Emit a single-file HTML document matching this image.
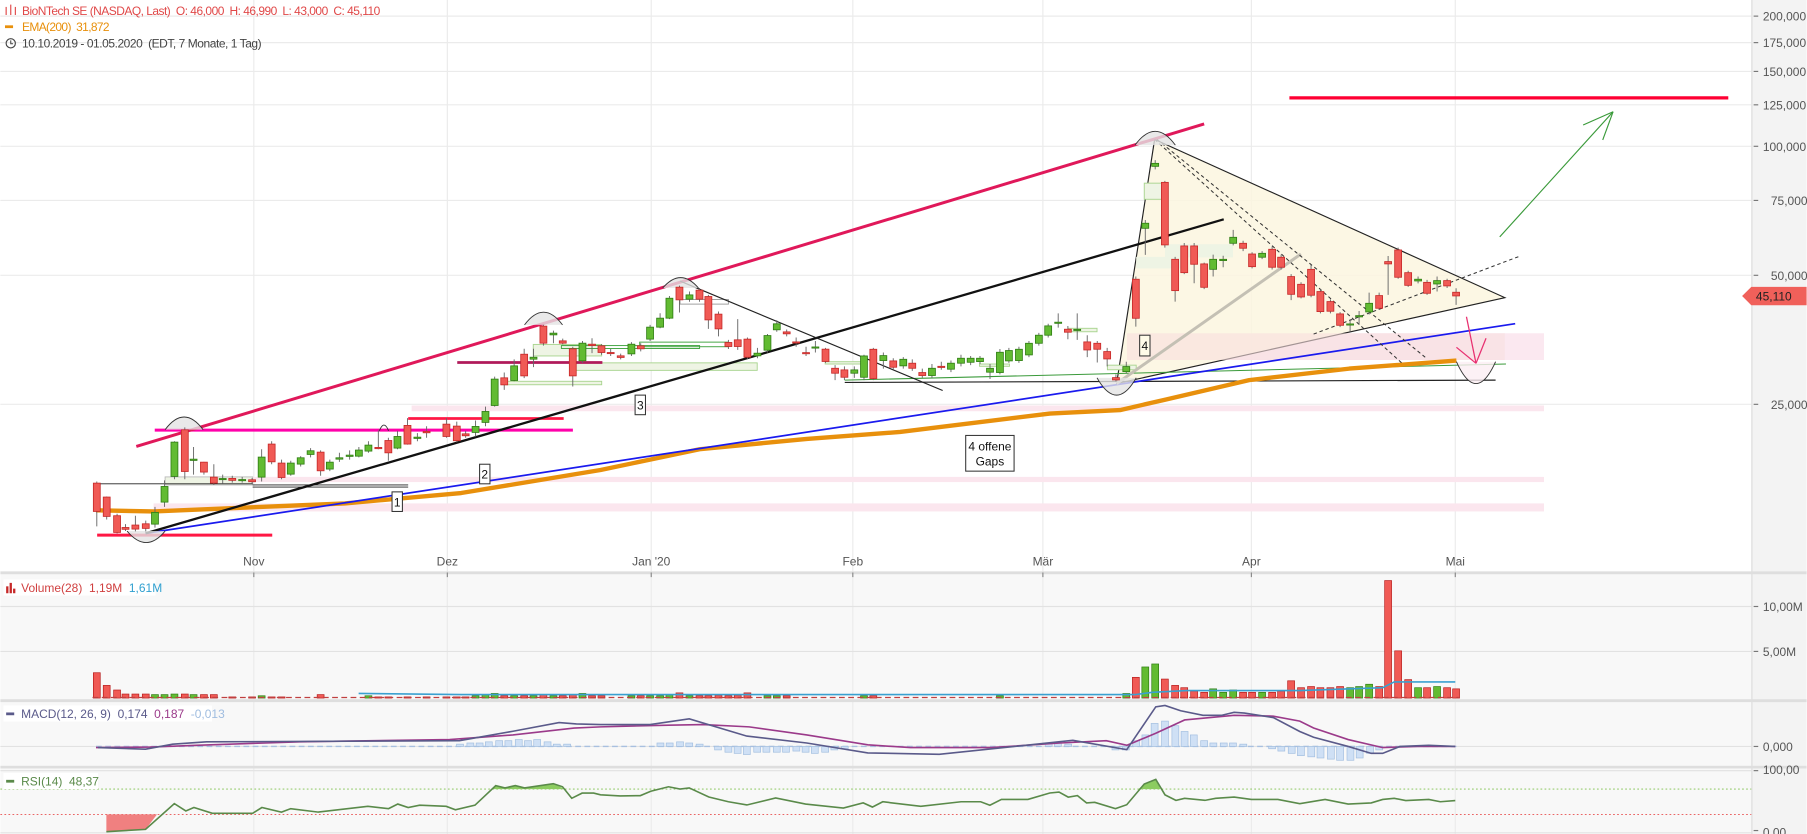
<!DOCTYPE html>
<html><head><meta charset="utf-8"><style>html,body{margin:0;padding:0;background:#fff;overflow:hidden}svg{display:block}text{font-family:"Liberation Sans",Arial,sans-serif}</style></head><body>
<svg width="1807" height="834" viewBox="0 0 1568 724" xmlns="http://www.w3.org/2000/svg">
<rect width="1568" height="724" fill="#fff"/>
<rect x="0" y="498" width="1520" height="226" fill="#f8f8f8"/>
<rect x="1520" y="0" width="48" height="724" fill="#f3f3f3"/>
<line x1="1520.5" y1="0" x2="1520.5" y2="724" stroke="#dcdcdc"/>
<!-- grid -->
<g stroke="#ebebeb" stroke-width="1">
<line x1="0" y1="14" x2="1520" y2="14"/><line x1="0" y1="37" x2="1520" y2="37"/><line x1="0" y1="62" x2="1520" y2="62"/><line x1="0" y1="91" x2="1520" y2="91"/><line x1="0" y1="127" x2="1520" y2="127"/><line x1="0" y1="174" x2="1520" y2="174"/><line x1="0" y1="239" x2="1520" y2="239"/><line x1="0" y1="351" x2="1520" y2="351"/>
<line x1="220" y1="0" x2="220" y2="724"/><line x1="388" y1="0" x2="388" y2="724"/><line x1="565" y1="0" x2="565" y2="724"/><line x1="740" y1="0" x2="740" y2="724"/><line x1="905" y1="0" x2="905" y2="724"/><line x1="1086" y1="0" x2="1086" y2="724"/><line x1="1263" y1="0" x2="1263" y2="724"/>
</g>
<g stroke="#e2e2e2"><line x1="0" y1="526.5" x2="1520" y2="526.5"/><line x1="0" y1="565.5" x2="1520" y2="565.5"/><line x1="0" y1="648" x2="1520" y2="648"/><line x1="0" y1="669" x2="1520" y2="669"/><line x1="0" y1="723" x2="1520" y2="723"/></g>
<line x1="0" y1="685" x2="1520" y2="685" stroke="#7cc04a" stroke-width=".8" stroke-dasharray="1.5,2"/>
<line x1="0" y1="707" x2="1520" y2="707" stroke="#e85050" stroke-width=".8" stroke-dasharray="1.5,2"/>
<!-- separators -->
<rect x="0" y="496" width="1568" height="2.5" fill="#dedede"/>
<rect x="0" y="607" width="1568" height="2.5" fill="#dedede"/>
<rect x="0" y="664.8" width="1568" height="2.3" fill="#dedede"/>
<!-- axis labels -->
<g font-size="10.4" fill="#555">
<g stroke="#777"><line x1="1522" y1="14" x2="1526" y2="14"/><line x1="1522" y1="37" x2="1526" y2="37"/><line x1="1522" y1="62" x2="1526" y2="62"/><line x1="1522" y1="91" x2="1526" y2="91"/><line x1="1522" y1="127" x2="1526" y2="127"/><line x1="1522" y1="174" x2="1526" y2="174"/><line x1="1522" y1="239" x2="1526" y2="239"/><line x1="1522" y1="351" x2="1526" y2="351"/><line x1="1522" y1="526.5" x2="1526" y2="526.5"/><line x1="1522" y1="565.5" x2="1526" y2="565.5"/><line x1="1522" y1="648" x2="1526" y2="648"/><line x1="1522" y1="669" x2="1526" y2="669"/><line x1="1522" y1="721" x2="1526" y2="721"/></g>
<text x="1530" y="18">200,000</text><text x="1530" y="41">175,000</text><text x="1530" y="66">150,000</text><text x="1530" y="95">125,000</text><text x="1530" y="131">100,000</text><text x="1537" y="178">75,000</text><text x="1537" y="243">50,000</text><text x="1537" y="355">25,000</text>
<text x="1530" y="530.5">10,00M</text><text x="1530" y="569.5">5,00M</text><text x="1530" y="652">0,000</text><text x="1530" y="672">100,00</text><text x="1530" y="726">0,00</text>
<g text-anchor="middle"><text x="220" y="491">Nov</text><text x="388" y="491">Dez</text><text x="565" y="491">Jan '20</text><text x="740" y="491">Feb</text><text x="905" y="491">Mär</text><text x="1086" y="491">Apr</text><text x="1263" y="491">Mai</text></g>
</g>
<g stroke="#888"><line x1="220" y1="497" x2="220" y2="501"/><line x1="388" y1="497" x2="388" y2="501"/><line x1="565" y1="497" x2="565" y2="501"/><line x1="740" y1="497" x2="740" y2="501"/><line x1="905" y1="497" x2="905" y2="501"/><line x1="1086" y1="497" x2="1086" y2="501"/><line x1="1263" y1="497" x2="1263" y2="501"/></g>
<!-- price tag -->
<path d="M1512 257 L1520 249 L1568 249 L1568 265 L1520 265 Z" fill="#f0605a"/>
<text x="1524" y="261" font-size="10.4" fill="#222">45,110</text>
<!-- header -->
<g font-size="10.4">
<g stroke="#e04848" stroke-width="1"><line x1="5" y1="6" x2="5" y2="13"/><line x1="9" y1="4" x2="9" y2="13"/><line x1="13" y1="6" x2="13" y2="13"/></g>
<text x="18.8" y="13.2" fill="#e04848" xml:space="preserve" textLength="311">BioNTech SE (NASDAQ, Last)  O: 46,000  H: 46,990  L: 43,000  C: 45,110</text>
<rect x="4" y="22" width="7" height="2.4" fill="#e8900c"/>
<text x="18.8" y="26.8" fill="#e8900c" xml:space="preserve" textLength="76">EMA(200)  31,872</text>
<circle cx="9" cy="37.6" r="4" fill="none" stroke="#444" stroke-width="1"/><path d="M9 35 V38 H11" fill="none" stroke="#444" stroke-width=".9"/>
<text x="18.8" y="41.3" fill="#444" xml:space="preserve" textLength="208">10.10.2019 - 01.05.2020  (EDT, 7 Monate, 1 Tag)</text>
</g>
<!-- pink gap bands -->
<g fill="#fbe6ee">
<rect x="133" y="437" width="1207" height="7"/>
<rect x="219" y="414" width="1121" height="4.5"/>
<rect x="357" y="352" width="983" height="5"/>
<rect x="978" y="289.3" width="362" height="23.2" fill-opacity=".9"/>
</g>
<!-- triangle -->
<path d="M1002 121 L1306 258.4 L969 333 Z" fill="#fbf6df" fill-opacity=".85" stroke="#222" stroke-width="1"/>
<rect x="978" y="289.3" width="328" height="23.2" fill="#f9dfe0" fill-opacity=".6"/>
<!-- green gap rects -->
<g fill="#eef4e4" stroke="#a8d48e" stroke-width=".8">
<rect x="143" y="414" width="76" height="7" stroke="#bbb"/>
<rect x="462.6" y="299" width="59.4" height="10"/>
<rect x="497" y="315" width="160" height="6.5"/>
<rect x="437" y="331" width="85" height="3"/>
<rect x="716" y="314" width="34" height="2"/>
<rect x="850" y="316" width="26" height="2"/>
<rect x="927" y="285" width="25" height="3"/>
<rect x="961" y="317" width="25" height="4"/>
<rect x="993" y="159" width="18" height="14"/>
<rect x="1011" y="212" width="59" height="11.5" stroke="none"/>
<rect x="986" y="223" width="41" height="10" stroke="none"/>
</g>
<g fill="none" stroke="#3aa03a" stroke-width=".8"><rect x="487" y="300" width="120" height="2.5"/><rect x="555" y="297" width="77" height="4"/></g>
<rect x="590" y="260" width="42" height="4" fill="none" stroke="#999" stroke-width=".8"/>
<!-- horizontal support lines -->
<line x1="84" y1="420" x2="219" y2="420" stroke="#222" stroke-width=".8"/>
<line x1="219" y1="421" x2="354" y2="421" stroke="#222" stroke-width=".8"/>
<line x1="219" y1="422.8" x2="354" y2="422.8" stroke="#222" stroke-width=".8"/>
<line x1="733" y1="332" x2="1298" y2="330" stroke="#222" stroke-width="1"/>
<line x1="733" y1="330" x2="1307" y2="316" stroke="#3a9a3a" stroke-width=".9"/>
<line x1="84" y1="464.5" x2="236" y2="464.5" stroke="#ff1744" stroke-width="2.6"/>
<line x1="134" y1="373.4" x2="497" y2="373.4" stroke="#ff00aa" stroke-width="2.6"/>
<line x1="354" y1="363.3" x2="489" y2="363.3" stroke="#ff1744" stroke-width="2.4"/>
<line x1="396.6" y1="314.7" x2="522.6" y2="314.7" stroke="#b01a5a" stroke-width="2.4"/>
<line x1="1119" y1="85" x2="1500" y2="85" stroke="#ff0033" stroke-width="2.8"/>
<!-- trend lines -->
<polyline points="83,443 133,444 299,437 400,428 521,408 607,390 700,381 781,375 911,359 972,356 1011,347 1084,330 1171,320 1264,313" fill="none" stroke="#e8900c" stroke-width="3.8" stroke-linejoin="round"/>
<line x1="126" y1="463" x2="1315" y2="281" stroke="#1a1aee" stroke-width="1.5"/>
<line x1="126" y1="463" x2="1062" y2="190.4" stroke="#111" stroke-width="2"/>
<line x1="118" y1="387.6" x2="1045" y2="107.6" stroke="#e0185a" stroke-width="2.6"/>
<line x1="590" y1="244" x2="818" y2="339" stroke="#222" stroke-width="1"/>
<line x1="969" y1="333" x2="1129" y2="220.5" stroke="#c4c0b4" stroke-width="2.6"/>
<g stroke="#333" stroke-width=".9" stroke-dasharray="3,2.5" fill="none">
<line x1="1002" y1="121" x2="1217" y2="315.5"/><line x1="1004" y1="121" x2="1238" y2="311"/><line x1="1140" y1="290" x2="1320" y2="222"/>
</g>
<!-- arcs -->
<g fill="#e4e4e4" fill-opacity=".8" stroke="#333" stroke-width=".8">
<path d="M143 373 Q159.5 351 176 373"/>
<path d="M110 461 Q126.5 481 143 461"/>
<path d="M455 282 Q471.5 260 488 282"/>
<path d="M575 250 Q590.5 232 606 250"/>
<path d="M985 126 Q1002.5 102 1020 126"/>
<path d="M952 328 Q969 358 986 328"/>
<path d="M329 374 Q333 364 337 374" fill="none"/>
<path d="M1264 314 Q1281 352 1298 314" fill="#fbeef2"/>
</g>
<!-- candles: wicks -->
<g stroke="#666" stroke-width=".8">
<path d="M83.7 418V457M92.3 431V451M101.3 446V463M108.6 455V461M117.2 447.7V461.3M126.2 452V461.3M160.1 371V416M176.7 401V412M185.3 403V421M201.3 413V419M218.5 415V420M235.5 383V403M244.1 399V416M278 391V413M328.1 373.7V390M336.8 380V400M353.4 363V386M370 370V380M387.2 363V380M396.2 366V384M403.9 374V380M437.4 323.4V338.4M454.7 302.8V328.3M471.4 282V300M488.2 294V299M496.9 301V335.5M513.6 293.6V306.6M521.8 298.8V308M529.8 303V309M538.5 307V312M555.9 298V305M589.5 248V271.3M606.9 250V262M614.6 256V285.5M623.4 270.4V292M632 295V303M640.1 277V303.7M648.5 293V312M682.6 286V292M690.8 293V301M699.4 301V309M716.3 302V315M724.6 317V330M732.7 318V330M757.8 302V330M775.1 311V321M791.6 312V322M800.3 320V328M816.8 314V321M926.7 283V294.5M943.5 291V310M952.2 296V314.7M960.8 302V318M968.4 325V331M985.7 240V283.5M1010.9 157V215M1019.8 223V261.8M1027.7 211V238M1036.3 211V245.9M1045 228V251M1078.8 209V218M1086.6 219V233M1104 214V234M1111.8 221V234M1120.5 238V260.5M1129.1 245V259M1137.8 230V258M1145.9 251V272M1154.6 260V272M1163 271V284M1196.9 254V269M1204.7 222.2V256M1213.4 215V242M1222.1 235V249M1238.5 243V256M1255.9 242V250M1263.7 250.2V264.7"/>
<path d="M134.2 440V458M142.5 417V440M151.1 383V416M167.7 388V412M193 412V420M209.9 414V419M226.8 390V418M252.1 400V413M260.7 396V405M269.3 389V397M286 399V409M294.3 393V401M303.2 391V399M311.2 388V397M319.5 383V393M344.7 374V390M362 376V383M412.5 365V379M421.1 353V370M429.1 327V353M446 312V331M462.8 302.8V318.7M480.1 287V298M505.3 296V315M547.8 297V309M564 282V296M572.7 271.9V285M580.8 257V277M598.2 253V262M657.2 302V311M665.9 290V306M674 278V288M707.5 296V306M741.3 318V328M749.7 308V330M766.5 306V320M783.8 310V320M808.7 316V328M825.2 313V323M833.9 308V318M842.3 309V317M850.4 309V316M859.1 316V329M867.7 303V325M875.5 302V315M884.2 301V315M892.9 296V310M901.5 289V300M909.6 281V293M918.3 272V284.4M934.8 272V295M977.4 314V324M993.9 191V221.3M1002.5 139V147M1052.8 221V240M1061.5 222V232M1070.2 199.6V213M1095.3 218V225M1171.7 277V288M1179.5 270V282M1188.2 254V273M1230.7 240V246M1247.2 240V253"/>
</g>
<g fill="#f05a55" stroke="#c62828" stroke-width=".7">
<rect x="80.7" y="419.4" width="6" height="24.6"/><rect x="89.3" y="431.5" width="6" height="16.8"/><rect x="98.3" y="447.7" width="6" height="14.5"/><rect x="105.6" y="457.9" width="6" height="1.6"/><rect x="114.2" y="455.8" width="6" height="3.5"/><rect x="123.2" y="454.7" width="6" height="4"/><rect x="157.1" y="373.1" width="6" height="36.2"/><rect x="173.7" y="401.2" width="6" height="8.6"/><rect x="182.3" y="414.2" width="6" height="5.2"/><rect x="198.3" y="415.3" width="6" height="1.7"/><rect x="215.5" y="416.5" width="6" height="1.7"/><rect x="232.5" y="385.5" width="6" height="15.4"/><rect x="241.1" y="402" width="6" height="12.5"/><rect x="275" y="392.5" width="6" height="16.2"/><rect x="325.1" y="388.4" width="6" height="1.1"/><rect x="333.8" y="382.4" width="6" height="10.7"/><rect x="350.4" y="369.3" width="6" height="16.2"/><rect x="367" y="374.5" width="6" height="1.2"/><rect x="384.2" y="368.2" width="6" height="10.7"/><rect x="393.2" y="369.9" width="6" height="12.7"/><rect x="400.9" y="376.6" width="6" height="1.7"/><rect x="434.4" y="328" width="6" height="6.1"/><rect x="451.7" y="307.5" width="6" height="18.8"/><rect x="468.4" y="283.1" width="6" height="14.8"/><rect x="485.2" y="295.9" width="6" height="2"/><rect x="493.9" y="302.8" width="6" height="23.5"/><rect x="510.6" y="298.8" width="6" height="1.2"/><rect x="518.8" y="300.2" width="6" height="5.8"/><rect x="526.8" y="306" width="6" height="1"/><rect x="535.5" y="308.9" width="6" height="1.4"/><rect x="552.9" y="300.2" width="6" height="2.6"/><rect x="586.5" y="249.3" width="6" height="11"/><rect x="603.9" y="251.9" width="6" height="7.8"/><rect x="611.6" y="257.4" width="6" height="20.3"/><rect x="620.4" y="272.7" width="6" height="12.8"/><rect x="629" y="297.3" width="6" height="3.5"/><rect x="637.1" y="295" width="6" height="5.8"/><rect x="645.5" y="294.4" width="6" height="15.7"/><rect x="679.6" y="288.1" width="6" height="1.7"/><rect x="687.8" y="296.8" width="6" height="1"/><rect x="696.4" y="306.1" width="6" height="1"/><rect x="713.3" y="303.1" width="6" height="10.7"/><rect x="721.6" y="319.7" width="6" height="4.3"/><rect x="729.7" y="321.1" width="6" height="6.4"/><rect x="754.8" y="303.2" width="6" height="25.4"/><rect x="772.1" y="313.3" width="6" height="5.5"/><rect x="788.6" y="315.3" width="6" height="4.4"/><rect x="797.3" y="323.4" width="6" height="2.6"/><rect x="813.8" y="318" width="6" height="1"/><rect x="923.7" y="285.8" width="6" height="2.6"/><rect x="940.5" y="296.8" width="6" height="7"/><rect x="949.2" y="298" width="6" height="5.2"/><rect x="957.8" y="305.2" width="6" height="6.4"/><rect x="965.4" y="327.8" width="6" height="2"/><rect x="982.7" y="242.4" width="6" height="33.9"/><rect x="1007.9" y="158.3" width="6" height="54.3"/><rect x="1016.8" y="225.1" width="6" height="27.2"/><rect x="1024.7" y="213.5" width="6" height="23.2"/><rect x="1033.3" y="213.5" width="6" height="15.9"/><rect x="1042" y="229.1" width="6" height="20.3"/><rect x="1075.8" y="211.2" width="6" height="4.3"/><rect x="1083.6" y="220.5" width="6" height="11"/><rect x="1101" y="216.4" width="6" height="15.6"/><rect x="1108.8" y="223.3" width="6" height="8.7"/><rect x="1117.5" y="240.1" width="6" height="15.4"/><rect x="1126.1" y="246.8" width="6" height="11"/><rect x="1134.8" y="233.8" width="6" height="22.5"/><rect x="1142.9" y="253.1" width="6" height="17.4"/><rect x="1151.6" y="261.8" width="6" height="8.4"/><rect x="1160" y="272.5" width="6" height="9.9"/><rect x="1193.9" y="256.6" width="6" height="11"/><rect x="1201.7" y="227.1" width="6" height="2"/><rect x="1210.4" y="217" width="6" height="23.7"/><rect x="1219.1" y="236.7" width="6" height="11"/><rect x="1235.5" y="245.1" width="6" height="9.5"/><rect x="1252.9" y="243.6" width="6" height="4.6"/><rect x="1260.7" y="253.7" width="6" height="3.2"/>
</g>
<g fill="#62bb32" stroke="#2e7d12" stroke-width=".7">
<rect x="131.2" y="444.8" width="6" height="10.2"/><rect x="139.5" y="422.3" width="6" height="13.6"/><rect x="148.1" y="383.8" width="6" height="29.8"/><rect x="164.7" y="398.6" width="6" height="1.1"/><rect x="190" y="415.4" width="6" height="1"/><rect x="206.9" y="416.3" width="6" height="1"/><rect x="223.8" y="396.8" width="6" height="17.4"/><rect x="249.1" y="402" width="6" height="9.6"/><rect x="257.7" y="397.4" width="6" height="5.5"/><rect x="266.3" y="391.3" width="6" height="3.2"/><rect x="283" y="401.2" width="6" height="6"/><rect x="291.3" y="397.4" width="6" height="1.2"/><rect x="300.2" y="395.1" width="6" height="1.1"/><rect x="308.2" y="390.7" width="6" height="5.3"/><rect x="316.5" y="386.4" width="6" height="5.2"/><rect x="341.7" y="378.9" width="6" height="10.1"/><rect x="359" y="379.5" width="6" height="1.1"/><rect x="409.5" y="370.2" width="6" height="5.2"/><rect x="418.1" y="357.2" width="6" height="9.5"/><rect x="426.1" y="329.1" width="6" height="22.9"/><rect x="443" y="317.6" width="6" height="12.7"/><rect x="459.8" y="310.1" width="6" height="1.7"/><rect x="477.1" y="289.2" width="6" height="1.5"/><rect x="502.3" y="297.9" width="6" height="15.3"/><rect x="544.8" y="298.8" width="6" height="8.4"/><rect x="561" y="284" width="6" height="10.4"/><rect x="569.7" y="276.2" width="6" height="7.8"/><rect x="577.8" y="258.9" width="6" height="17.3"/><rect x="595.2" y="256" width="6" height="3.7"/><rect x="654.2" y="306.6" width="6" height="2.3"/><rect x="662.9" y="291.3" width="6" height="12.7"/><rect x="671" y="281.1" width="6" height="5.2"/><rect x="704.5" y="301.2" width="6" height="1"/><rect x="738.3" y="321.1" width="6" height="2.9"/><rect x="746.7" y="309" width="6" height="18.5"/><rect x="763.5" y="308.7" width="6" height="4.3"/><rect x="780.8" y="311.9" width="6" height="5.7"/><rect x="805.7" y="319.7" width="6" height="6.3"/><rect x="822.2" y="315.3" width="6" height="5.2"/><rect x="830.9" y="311" width="6" height="4.3"/><rect x="839.3" y="311" width="6" height="3.5"/><rect x="847.4" y="311" width="6" height="2.9"/><rect x="856.1" y="319.7" width="6" height="3.4"/><rect x="864.7" y="305.8" width="6" height="17.6"/><rect x="872.5" y="304.3" width="6" height="9"/><rect x="881.2" y="303.2" width="6" height="9.8"/><rect x="889.9" y="298" width="6" height="10.1"/><rect x="898.5" y="291" width="6" height="7"/><rect x="906.6" y="282.9" width="6" height="8.1"/><rect x="915.3" y="279.7" width="6" height="1"/><rect x="931.8" y="285.9" width="6" height="1"/><rect x="974.4" y="318.2" width="6" height="4.4"/><rect x="990.9" y="193.8" width="6" height="4.4"/><rect x="999.5" y="141.8" width="6" height="2.6"/><rect x="1049.8" y="225.1" width="6" height="8.7"/><rect x="1058.5" y="225.1" width="6" height="1.1"/><rect x="1067.2" y="206" width="6" height="5.2"/><rect x="1092.3" y="219.9" width="6" height="3.4"/><rect x="1168.7" y="281.2" width="6" height="1"/><rect x="1176.5" y="274" width="6" height="1.1"/><rect x="1185.2" y="263.3" width="6" height="7.5"/><rect x="1227.7" y="242.4" width="6" height="1.5"/><rect x="1244.2" y="243.6" width="6" height="2.9"/>
</g>
<!-- arrows -->
<g stroke="#e83070" stroke-width="1.1" fill="none"><line x1="1272.7" y1="275" x2="1281" y2="315.4"/><line x1="1264" y1="301.5" x2="1281" y2="315.4"/><line x1="1289.7" y1="293.6" x2="1281" y2="315.4"/></g>
<g stroke="#3a9a3a" stroke-width="1" fill="none"><line x1="1301.6" y1="205.6" x2="1400" y2="97"/><line x1="1374" y1="108.5" x2="1400" y2="97"/><line x1="1391" y1="121.5" x2="1400" y2="97"/></g>
<!-- boxed labels -->
<g font-size="10.4" fill="#111" text-anchor="middle">
<rect x="340" y="427" width="9" height="17" fill="#fff" stroke="#333" stroke-width=".9"/><text x="344.5" y="439.5">1</text>
<rect x="416" y="403" width="9" height="17" fill="#fff" stroke="#333" stroke-width=".9"/><text x="420.5" y="415.5">2</text>
<rect x="551" y="343" width="9" height="17" fill="#fff" stroke="#333" stroke-width=".9"/><text x="555.5" y="355.5">3</text>
<rect x="989" y="291" width="9" height="18" fill="#fffbe8" stroke="#333" stroke-width=".9"/><text x="993.5" y="304">4</text>
<rect x="838" y="378" width="42" height="31" fill="#fff" stroke="#333" stroke-width=".9"/><text x="859" y="391">4 offene</text><text x="859" y="404">Gaps</text>
</g>
<!-- volume -->
<g fill="#f05a55" stroke="#b71c1c" stroke-width=".6">
<rect x="80.7" y="584" width="6" height="22"/><rect x="89.3" y="595" width="6" height="11"/><rect x="98.3" y="599" width="6" height="7"/><rect x="105.6" y="602.5" width="6" height="3.5"/><rect x="114.2" y="602.5" width="6" height="3.5"/><rect x="123.2" y="602.5" width="6" height="3.5"/><rect x="157.1" y="602.5" width="6" height="3.5"/><rect x="173.7" y="603" width="6" height="3"/><rect x="182.3" y="603" width="6" height="3"/><rect x="198.3" y="605" width="6" height="1"/><rect x="215.5" y="605" width="6" height="1"/><rect x="232.5" y="605" width="6" height="1"/><rect x="241.1" y="605" width="6" height="1"/><rect x="275" y="603" width="6" height="3"/><rect x="325.1" y="605" width="6" height="1"/><rect x="333.8" y="605" width="6" height="1"/><rect x="350.4" y="605" width="6" height="1"/><rect x="367" y="605" width="6" height="1"/><rect x="384.2" y="605" width="6" height="1"/><rect x="393.2" y="605" width="6" height="1"/><rect x="400.9" y="605" width="6" height="1"/><rect x="434.4" y="604" width="6" height="2"/><rect x="451.7" y="604" width="6" height="2"/><rect x="468.4" y="603" width="6" height="3"/><rect x="485.2" y="604" width="6" height="2"/><rect x="493.9" y="603" width="6" height="3"/><rect x="510.6" y="604" width="6" height="2"/><rect x="518.8" y="604" width="6" height="2"/><rect x="552.9" y="604" width="6" height="2"/><rect x="586.5" y="601.5" width="6" height="4.5"/><rect x="603.9" y="604" width="6" height="2"/><rect x="611.6" y="604" width="6" height="2"/><rect x="620.4" y="603.5" width="6" height="2.5"/><rect x="629" y="604" width="6" height="2"/><rect x="637.1" y="603.5" width="6" height="2.5"/><rect x="645.5" y="601.5" width="6" height="4.5"/><rect x="679.6" y="604" width="6" height="2"/><rect x="754.8" y="604" width="6" height="2"/><rect x="982.7" y="588" width="6" height="18"/><rect x="1007.9" y="589.5" width="6" height="16.5"/><rect x="1016.8" y="595" width="6" height="11"/><rect x="1024.7" y="597" width="6" height="9"/><rect x="1033.3" y="600" width="6" height="6"/><rect x="1042" y="601" width="6" height="5"/><rect x="1075.8" y="601" width="6" height="5"/><rect x="1083.6" y="601" width="6" height="5"/><rect x="1101" y="601" width="6" height="5"/><rect x="1108.8" y="600" width="6" height="6"/><rect x="1117.5" y="591" width="6" height="15"/><rect x="1126.1" y="597" width="6" height="9"/><rect x="1134.8" y="596" width="6" height="10"/><rect x="1142.9" y="597" width="6" height="9"/><rect x="1151.6" y="597" width="6" height="9"/><rect x="1160" y="596" width="6" height="10"/><rect x="1193.9" y="596" width="6" height="10"/><rect x="1201.7" y="504" width="6" height="102"/><rect x="1210.4" y="565" width="6" height="41"/><rect x="1219.1" y="590" width="6" height="16"/><rect x="1235.5" y="597" width="6" height="9"/><rect x="1252.9" y="597" width="6" height="9"/><rect x="1260.7" y="598" width="6" height="8"/>
</g>
<g fill="#62bb32" stroke="#2e7d12" stroke-width=".6">
<rect x="131.2" y="603" width="6" height="3"/><rect x="139.5" y="603" width="6" height="3"/><rect x="148.1" y="602.5" width="6" height="3.5"/><rect x="164.7" y="603" width="6" height="3"/><rect x="223.8" y="604" width="6" height="2"/><rect x="316.5" y="604" width="6" height="2"/><rect x="409.5" y="604" width="6" height="2"/><rect x="418.1" y="603" width="6" height="3"/><rect x="426.1" y="602" width="6" height="4"/><rect x="443" y="604" width="6" height="2"/><rect x="459.8" y="604" width="6" height="2"/><rect x="477.1" y="604" width="6" height="2"/><rect x="502.3" y="602" width="6" height="4"/><rect x="544.8" y="604" width="6" height="2"/><rect x="561" y="604" width="6" height="2"/><rect x="569.7" y="604" width="6" height="2"/><rect x="577.8" y="603" width="6" height="3"/><rect x="595.2" y="604" width="6" height="2"/><rect x="662.9" y="604" width="6" height="2"/><rect x="671" y="604" width="6" height="2"/><rect x="746.7" y="604" width="6" height="2"/><rect x="864.7" y="604" width="6" height="2"/><rect x="974.4" y="602" width="6" height="4"/><rect x="990.9" y="579" width="6" height="27"/><rect x="999.5" y="576.4" width="6" height="29.6"/><rect x="1049.8" y="598" width="6" height="8"/><rect x="1058.5" y="601" width="6" height="5"/><rect x="1067.2" y="599" width="6" height="7"/><rect x="1092.3" y="601" width="6" height="5"/><rect x="1168.7" y="597" width="6" height="9"/><rect x="1176.5" y="596" width="6" height="10"/><rect x="1185.2" y="594" width="6" height="12"/><rect x="1227.7" y="597" width="6" height="9"/><rect x="1244.2" y="596" width="6" height="10"/>
</g>
<line x1="80" y1="605.5" x2="1266" y2="605.5" stroke="#c04040" stroke-width="1" stroke-dasharray="5,3"/>
<polyline points="311,602 400,603 985,603 1000,601 1030,599.5 1128,599.5 1200,597 1210,592 1263,592" fill="none" stroke="#3aa0d0" stroke-width="1.4"/>
<!-- MACD histogram -->
<line x1="83" y1="648" x2="1266" y2="648" stroke="#a8c0e0" stroke-width="1.2" stroke-dasharray="5,3"/>
<g fill="#cfe0f5" stroke="#a3bfe0" stroke-width=".6">
<rect x="396" y="646" width="6" height="2"/><rect x="405" y="645" width="6" height="3"/><rect x="413" y="645" width="6" height="3"/><rect x="421" y="644" width="6" height="4"/><rect x="430" y="643" width="6" height="5"/><rect x="438" y="643" width="6" height="5"/><rect x="447" y="642" width="6" height="6"/><rect x="455" y="643" width="6" height="5"/><rect x="463" y="642" width="6" height="6"/><rect x="472" y="644" width="6" height="4"/><rect x="480" y="646" width="6" height="2"/><rect x="489" y="646" width="6" height="2"/>
<rect x="570" y="645" width="6" height="3"/><rect x="578" y="645" width="6" height="3"/><rect x="587" y="644" width="6" height="4"/><rect x="595" y="645" width="6" height="3"/><rect x="604" y="646" width="6" height="2"/>
<rect x="620" y="648" width="6" height="3"/><rect x="629" y="648" width="6" height="5"/><rect x="637" y="648" width="6" height="6"/><rect x="645" y="648" width="6" height="7"/><rect x="654" y="648" width="6" height="5"/><rect x="662" y="648" width="6" height="5"/><rect x="671" y="648" width="6" height="5"/><rect x="679" y="648" width="6" height="5"/><rect x="688" y="648" width="6" height="4"/><rect x="696" y="648" width="6" height="5"/><rect x="704" y="648" width="6" height="6"/><rect x="713" y="648" width="6" height="5"/><rect x="721" y="648" width="6" height="3"/><rect x="730" y="648" width="6" height="2"/>
<rect x="907" y="645" width="6" height="3"/><rect x="915" y="645" width="6" height="3"/><rect x="924" y="646" width="6" height="2"/><rect x="965" y="648" width="6" height="3"/><rect x="974" y="648" width="6" height="3"/>
<rect x="983" y="643" width="6" height="5"/><rect x="991" y="638" width="6" height="10"/><rect x="999" y="628" width="6" height="20"/><rect x="1008" y="626" width="6" height="22"/><rect x="1017" y="630" width="6" height="18"/><rect x="1025" y="635" width="6" height="13"/><rect x="1033" y="638" width="6" height="10"/><rect x="1042" y="643" width="6" height="5"/><rect x="1050" y="645" width="6" height="3"/><rect x="1059" y="645" width="6" height="3"/><rect x="1067" y="645" width="6" height="3"/><rect x="1076" y="646" width="6" height="2"/>
<rect x="1101" y="648" width="6" height="2"/><rect x="1109" y="648" width="6" height="4"/><rect x="1118" y="648" width="6" height="6"/><rect x="1126" y="648" width="6" height="8"/><rect x="1135" y="648" width="6" height="9"/><rect x="1143" y="648" width="6" height="10"/><rect x="1152" y="648" width="6" height="11"/><rect x="1160" y="648" width="6" height="12"/><rect x="1169" y="648" width="6" height="12"/><rect x="1177" y="648" width="6" height="10"/><rect x="1186" y="648" width="6" height="6"/><rect x="1194" y="648" width="6" height="3"/>
</g>
<polyline points="83,649 130,648.5 170,647 260,644 390,642 445,638 498,632 521,631 580,629.5 610,629 650,631 700,638 753,646.6 790,649 860,649 920,645 960,643 978,647 1003,636.5 1028,625 1071,621 1105,621.7 1128,626 1140,632 1170,642 1200,649 1230,648 1263,648" fill="none" stroke="#9b3a8a" stroke-width="1.4"/>
<polyline points="84.7,649 126,650.4 149.5,646 179,644 398.5,643 445,634.8 485,627.3 500,628.5 521,629 564,629 598,624 648,639 700,645 753,653.6 815,654.8 931,642.7 977.8,650.8 1003,613.6 1011,612.4 1024.6,617 1044,621 1060,621 1071,618.4 1080,619 1105,622.9 1128,635 1140,640 1170,648 1190,654 1200,654 1215,648 1240,647 1263,648" fill="none" stroke="#5a5a8a" stroke-width="1.4"/>
<!-- RSI -->
<path d="M92 707 L92 722 L126 720 L136 707 Z" fill="#f08080"/>
<path d="M426 685 L430 682 L438 684 L448 682 L458 684 L480 680.3 L490 685 Z" fill="#8ccc60"/>
<path d="M988 685 L993 680.6 L1003 676.6 L1007 685 Z" fill="#8ccc60"/>
<polyline points="92,722 126,720 151,697.6 161,704 168,701 184,706 219,706 227,701 244,705 252,702 276,705 319,700 337,702 345,698 354,701 364,699 387,700 395,703 412,699 430,682 438,684 447,682 455,684 480,680.3 488,683 496,693 505,688.5 515,688.5 521,690 538,691 555.5,690.7 564.6,686.9 580,683 590,685 598,684 615,691.9 632,696 648,698.8 673,692.7 699,698 731.8,701.5 749,697 757,700.6 766,696 799,700 834,696 851,696 859,699 869,694 892,694 911,688.4 919,687.6 927,692 935,690.7 942.9,697 950,696.5 968,702 977.8,698.6 993,680.6 1003,676.6 1011,690 1020.5,694.8 1028,693 1045.7,694.8 1055,693 1071,691.9 1086,694 1109,694 1128,697.7 1150,694 1170,698 1190,697 1200,694 1210,693 1220,695 1240,694 1250,696 1263,695" fill="none" stroke="#5a8a4a" stroke-width="1.4"/>
<!-- panel labels -->
<g font-size="10.4">
<rect x="2.7" y="503" width="132" height="14" fill="#fff"/>
<g fill="#c62828"><rect x="5" y="509" width="2" height="6"/><rect x="8" y="506" width="2" height="9"/><rect x="11" y="511" width="2" height="4"/></g>
<text x="18" y="514" fill="#d04040" xml:space="preserve">Volume(28)  1,19M  <tspan fill="#30a0d0">1,61M</tspan></text>
<rect x="2.7" y="612.5" width="181" height="14" fill="#fff"/>
<rect x="5" y="618.5" width="7" height="2.4" fill="#5a5a8a"/>
<text x="18" y="623.5" fill="#5a5a8a" xml:space="preserve">MACD(12, 26, 9)  0,174  <tspan fill="#9b3a8a">0,187</tspan>  <tspan fill="#a0bde0">-0,013</tspan></text>
<rect x="2.7" y="671" width="82" height="14" fill="#fff"/>
<rect x="5" y="677" width="7" height="2.4" fill="#5a8a4a"/>
<text x="18" y="682" fill="#5a8a4a" xml:space="preserve">RSI(14)  48,37</text>
</g>
</svg>
</body></html>
